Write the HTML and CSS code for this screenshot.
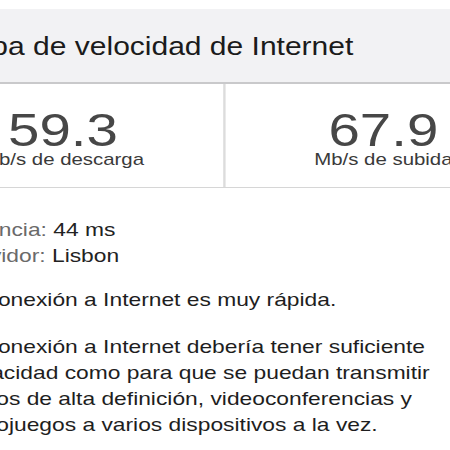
FILE: index.html
```html
<!DOCTYPE html>
<html lang="es">
<head>
<meta charset="utf-8">
<title>Prueba de velocidad de Internet</title>
<link rel="stylesheet" href="styles.css">
</head>
<body>
<div class="stretch">
  <div class="page">
    <header class="header">
      <h1 class="title">Prueba de velocidad de Internet</h1>
    </header>
    <section class="speeds">
      <div class="speed">
        <div class="speed-value">59.3</div>
        <div class="speed-label">Mb/s de descarga</div>
      </div>
      <div class="divider"></div>
      <div class="speed speed-right">
        <div class="speed-value">67.9</div>
        <div class="speed-label">Mb/s de subida</div>
      </div>
    </section>
    <section class="details">
      <div class="info">
        <div class="info-row"><span class="info-key">Latencia:</span> <span class="info-val">44 ms</span></div>
        <div class="info-row"><span class="info-key">Servidor:</span> <span class="info-val">Lisbon</span></div>
      </div>
      <p class="summary">Tu conexión a Internet es muy rápida.</p>
      <p class="desc">Tu conexión a Internet debería tener suficiente capacidad como para que se puedan transmitir videos de alta definición, videoconferencias y videojuegos a varios dispositivos a la vez.</p>
    </section>
  </div>
</div>
</body>
</html>
```

FILE: styles.css
```css
html, body {
  margin: 0;
  padding: 0;
  background: #ffffff;
  overflow: hidden;
}

body {
  width: 450px;
  height: 450px;
  font-family: "Liberation Sans", Arial, sans-serif;
}

.stretch {
  transform: scaleX(1.2);
  transform-origin: 0 0;
}

.page {
  width: 560px;
  margin-left: -81px;
}

.header {
  margin-top: 9px;
  background: #f2f2f4;
  border-bottom: 2px solid #c9c9cb;
  padding: 23px 0 21px 21px;
}

.title {
  margin: 0;
  font-size: 25px;
  line-height: 29px;
  font-weight: normal;
  color: #1b1b1b;
}

.speeds {
  display: flex;
  border-bottom: 1.5px solid #d6d6d6;
}

.speed {
  width: 267px;
  padding: 26px 0 17px;
  text-align: center;
}

.speed-right {
  width: 263px;
}

.divider {
  width: 2px;
  background: #dcdcdc;
}

.speed-value {
  font-size: 47px;
  line-height: 40px;
  color: #474747;
}

.speed-label {
  font-size: 17px;
  line-height: 20px;
  color: #3a3a3a;
}

.details {
  padding: 29px 0 0 43px;
  width: 404px;
  font-size: 19px;
  line-height: 26px;
  color: #1e1e1e;
}

.info-key {
  color: #6a6a6a;
}

.info-val {
  color: #222222;
}

.summary {
  margin: 18px 0 0;
}

.desc {
  margin: 21px 0 0;
}
```
